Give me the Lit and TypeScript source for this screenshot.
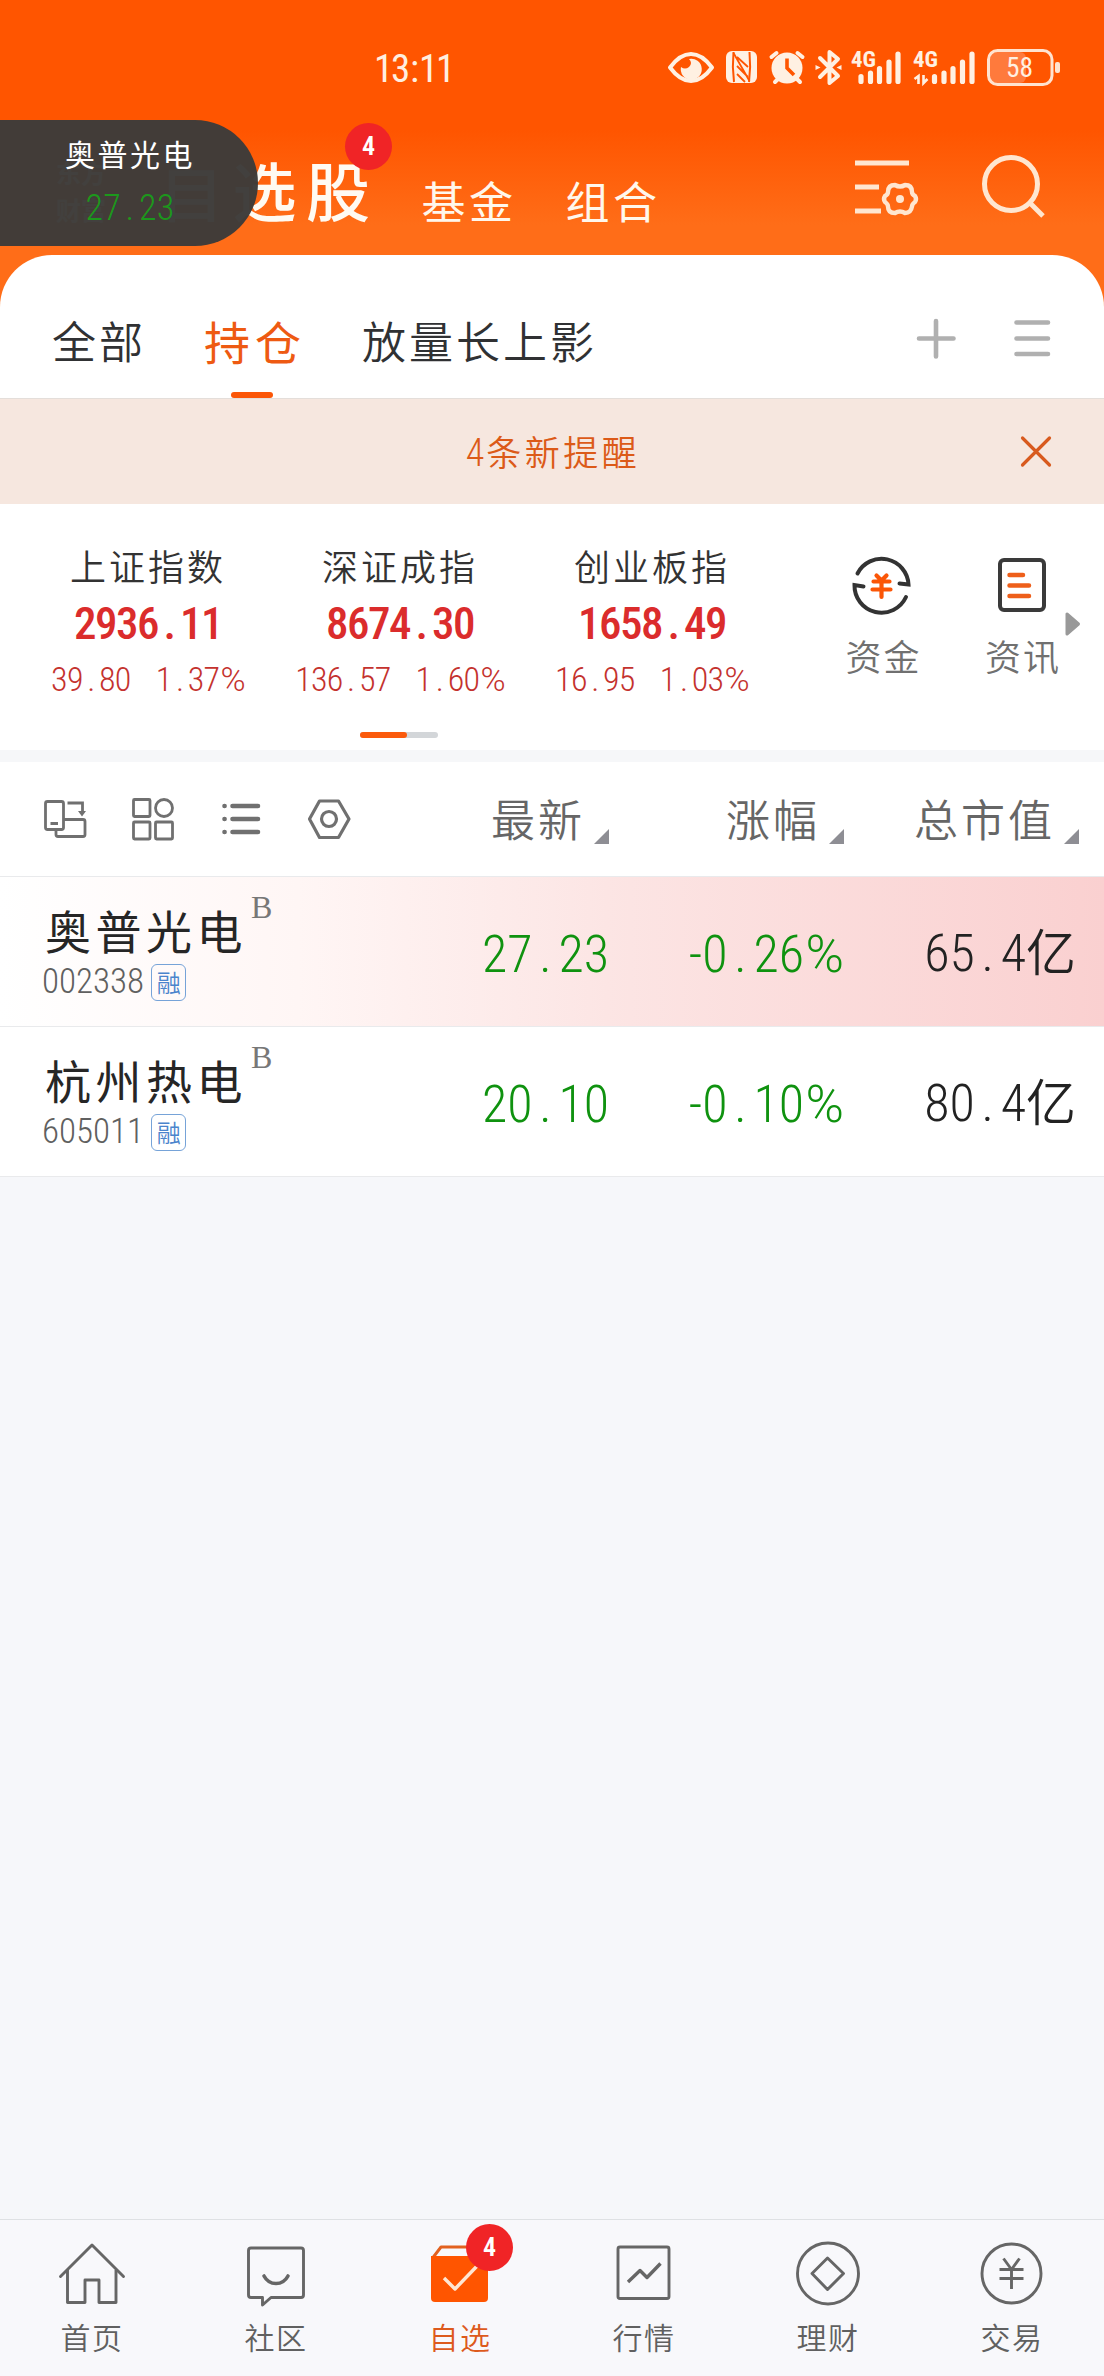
import { LitElement, html, svg, css, nothing } from "lit";
import { customElement, property } from "lit/decorators.js";
import { classMap } from "lit/directives/class-map.js";

/** Figure whose decimal point takes a full digit cell and whose percent sign is wide. */
const figure = (value: string) => {
  const percent = value.endsWith("%");
  const [whole, rest] = value.replace("%", "").split(".");
  return html`${whole}<span class="dot">.</span>${rest}${percent ? html`<span class="percent">%</span>` : nothing}`;
};

const figureStyles = css`
  .num {
    font-family: "Roboto Condensed", Roboto, "Noto Sans CJK SC", sans-serif;
    font-weight: 300;
    white-space: nowrap;
  }
  .dot {
    padding: 0 0.13em;
  }
  .percent {
    font-family: Roboto, sans-serif;
    font-weight: 300;
    margin-left: 0.03em;
  }
  svg {
    display: block;
    flex: none;
    fill: none;
    overflow: visible;
  }
`;

@customElement("status-bar")
class StatusBar extends LitElement {
  static styles = [
    figureStyles,
    css`
      :host {
        display: flex;
        height: 120px;
        box-sizing: border-box;
        padding: 41px 44px 0 374px;
        justify-content: space-between;
        color: #ffeedf;
      }
      .time {
        font-size: 39px;
        line-height: 40px;
        letter-spacing: -2.200px;
        margin-top: 8px;
        font-weight: 400;
      }
      .colon {
        padding: 0 2px;
      }
      .sig {
        font: bold 22px/22px "Roboto Condensed", Roboto, sans-serif;
      }
      .bat {
        font: 28px/28px "Roboto Condensed", Roboto, sans-serif;
      }
    `,
  ];
  render() {
    return html`
      <div class="num time">13<span class="colon">:</span>11</div>
      <svg width="394" height="50" viewBox="666 41 394 50">
        <g stroke="#fff0e2" stroke-width="4" stroke-linecap="round" stroke-linejoin="round">
          <path d="M670 67.500Q680 54 691 54T712 67.500Q702 81 691 81T670 67.500Z" />
          <path d="M771.500 57l5-4M802.500 57l-5-4M775 82l4-4M800 82l-4-4" />
          <path d="M820 58L838 76L829.500 83V52L838 59L820 77" />
        </g>
        <g fill="#fff0e2">
          <path d="M689 59a10.500 10.500 0 1 1-8 8q4 3 8 0q4-4 0-8Z" />
          <rect x="726" y="51" width="31" height="32" rx="6" />
          <circle cx="787" cy="68" r="15.500" />
          <path d="M815.500 65l5 2.500l-5 2.500zM841.500 65l-5 2.500l5 2.500z" />
        </g>
        <path d="M733.500 52Q732 67 734 82M749.500 52Q751 67 749 82" stroke="#ff5500" stroke-width="2" />
        <path d="M733.500 53L749.500 81M737 57L748 67M737 66L748 77M737 74l8 8" stroke="#ff5500" stroke-width="1.800" />
        <path d="M787 58.500V68l7 7" stroke="#ff5500" stroke-width="3.600" />
        <text class="sig" x="851" y="67" fill="#fff0e2" textLength="25" lengthAdjust="spacingAndGlyphs">4G</text>
        <text class="sig" x="913" y="67" fill="#fff0e2" textLength="25" lengthAdjust="spacingAndGlyphs">4G</text>
        <path
          d="M861 76.500V81.500M870.500 73V81.500M879.500 68.500V81.500M889 62V81.500M898 54V81.500M934.500 76.500V81.500M944 73V81.500M953 68.500V81.500M962.500 62V81.500M972 54V81.500"
          stroke="#fff0e2" stroke-width="5.200" stroke-linecap="round"
        />
        <path d="M918.500 84V76l-4 3M923.500 75V83l4-4" stroke="#fff0e2" stroke-width="2.600" />
        <rect x="990" y="52" width="36" height="31" rx="6" fill="#ff7a3c" />
        <rect x="988.500" y="50.500" width="63.500" height="34" rx="9" stroke="#ffe3d0" stroke-width="3" />
        <rect x="1055" y="62" width="5" height="11" rx="2" fill="#ffe3d0" />
        <text class="bat" x="1006" y="77" fill="#fff0e2" textLength="27" lengthAdjust="spacingAndGlyphs">58</text>
      </svg>
    `;
  }
}

@customElement("title-bar")
class TitleBar extends LitElement {
  static styles = [
    figureStyles,
    css`
      :host {
        display: flex;
        height: 135px;
        position: relative;
        color: #fff7ec;
      }
      .logo {
        width: 54px;
        margin: 34px 0 0 56px;
        font-size: 25px;
        line-height: 37px;
        font-weight: 700;
        height: 76px;
      }
      .title {
        margin: 26px 0 0 49px;
        font-size: 64px;
        line-height: 84px;
        letter-spacing: 9.500px;
        font-weight: 500;
        color: #fffaf2;
        height: 84px;
      }
      .link {
        margin-top: 50px;
        font-size: 44px;
        line-height: 60px;
        letter-spacing: 3.500px;
        font-weight: 400;
      }
      .fund {
        margin-left: 42px;
      }
      .combo {
        margin-left: 49px;
      }
      .tools {
        margin: 35px 57px 0 auto;
      }
      .badge {
        position: absolute;
        left: 345px;
        top: 3px;
        width: 47px;
        height: 47px;
        border-radius: 50%;
        background: #f02426;
        font-size: 26px;
        font-weight: 600;
        line-height: 47px;
        text-align: center;
        color: #fff;
      }
      .pill {
        position: absolute;
        left: 0;
        top: 0;
        width: 258px;
        height: 126px;
        border-radius: 0 63px 63px 0;
        background: rgba(61, 59, 57, 0.975);
        color: #fff;
        text-align: center;
        box-sizing: border-box;
        padding: 11px 0 0 2px;
      }
      .name {
        font-size: 30px;
        line-height: 44px;
        letter-spacing: 2.500px;
        font-weight: 400;
      }
      .price {
        color: #1c981c;
        font-size: 36px;
        line-height: 50px;
        letter-spacing: 0.200px;
        margin-top: 8px;
      }
    `,
  ];
  render() {
    return html`
      <div class="logo">东方财富</div>
      <div class="title">自选股</div>
      <div class="link fund">基金</div>
      <div class="link combo">组合</div>
      <svg class="tools" width="194" height="64" viewBox="853 155 194 64" stroke="#ffe6d0" stroke-width="5">
        <path d="M855 163H909M855 187H879M855 211H881" />
        <path
          d="M895 185Q900 188 905 185Q912 185 912 192Q912 194.500 915 196Q917 199 915 202Q912 204 912 206.500Q911 213 905 213Q900 210 895 213Q888 213 888 206.500Q888 204 885 202Q883 199 885 196Q888 194.500 888 192Q888 185 895 185Z"
          stroke-width="4.400" stroke-linejoin="round"
        />
        <circle cx="900" cy="199" r="4" fill="#ffe6d0" stroke="none" />
        <circle cx="1011" cy="184" r="26.500" />
        <path d="M1029 202L1043 216" />
      </svg>
      <div class="badge num">4</div>
      <div class="pill">
        <div class="name">奥普光电</div>
        <div class="num price">${figure("27.23")}</div>
      </div>
    `;
  }
}

@customElement("group-tabs")
class GroupTabs extends LitElement {
  static styles = [
    figureStyles,
    css`
      :host {
        display: flex;
        height: 143px;
        background: #fff;
        border-radius: 52px 52px 0 0;
        padding: 0 51px 0 52px;
        color: #303133;
      }
      .tab {
        font-size: 44px;
        line-height: 60px;
        padding-top: 55px;
        letter-spacing: 3px;
        margin-right: 58px;
      }
      .on {
        position: relative;
        color: #ee5a12;
        font-size: 46px;
        letter-spacing: 5px;
        font-weight: 400;
        margin-right: 56px;
      }
      .on::after {
        content: "";
        position: absolute;
        left: 27px;
        bottom: 0;
        width: 42px;
        height: 6px;
        border-radius: 3px;
        background: #fb5607;
      }
      .tools {
        margin: 61px 0 0 auto;
      }
    `,
  ];
  @property({ attribute: false }) tabs: string[] = ["全部", "持仓", "放量长上影"];
  render() {
    return html`
      ${this.tabs.map((t, i) => html`<div class=${classMap({ tab: true, on: i === 1 })}>${t}</div>`)}
      <svg class="tools" width="140" height="46" viewBox="913 316 140 46" stroke="#b0b0b0" stroke-width="4.600" stroke-linecap="round">
        <path d="M919 338.500H953.500M936 321V356.500M1016.500 322.500H1048M1016.500 338.500H1048M1016.500 354H1048" />
      </svg>
    `;
  }
}

@customElement("alert-banner")
class AlertBanner extends LitElement {
  static styles = [
    figureStyles,
    css`
      :host {
        display: grid;
        grid-template-columns: 104px 1fr 104px;
        align-items: center;
        justify-items: center;
        height: 106px;
        box-sizing: border-box;
        border-top: 1px solid #e4deda;
        background: #f6e7df;
        color: #dc5a18;
      }
      .msg {
        grid-column: 2;
        font-size: 35px;
        line-height: 50px;
        letter-spacing: 3.500px;
        padding-left: 2px;
      }
      .num {
        font-size: 38px;
        letter-spacing: 2px;
      }
      svg {
        margin: 0 32px 0 0;
      }
    `,
  ];
  render() {
    return html`
      <div class="msg"><span class="num">4</span>条新提醒</div>
      <svg width="34" height="34" viewBox="0 0 34 34" stroke="#d85a1e" stroke-width="3.200" stroke-linecap="round">
        <path d="M3.500 3L30.500 30M30.500 3L3.500 30" />
      </svg>
    `;
  }
}

interface IndexQuote {
  name: string;
  value: string;
  diff: string;
  pct: string;
}

@customElement("index-strip")
class IndexStrip extends LitElement {
  static styles = [
    figureStyles,
    css`
      :host {
        display: grid;
        grid-template-columns: 252px 252px 252px 34px 140px 139px;
        padding: 35px 0 0 22px;
        height: 246px;
        box-sizing: border-box;
        background: #fff;
        position: relative;
      }
      .quote,
      .tool {
        display: flex;
        flex-direction: column;
        align-items: center;
      }
      .name {
        font-size: 36px;
        line-height: 54px;
        letter-spacing: 3px;
        color: #333;
        margin-top: -1px;
      }
      .value {
        font-size: 45px;
        line-height: 56px;
        font-weight: 500;
        letter-spacing: -1.500px;
        color: #db2c2c;
        margin-top: 4px;
      }
      .value .dot {
        padding: 0 0.12em;
      }
      .move {
        display: flex;
        gap: 25px;
        font-size: 34px;
        line-height: 54px;
        letter-spacing: -0.700px;
        color: #c4322e;
      }
      .money {
        grid-column: 5;
      }
      .tool svg {
        margin-top: 14px;
      }
      .label {
        margin-top: 11px;
        font-size: 36px;
        line-height: 54px;
        letter-spacing: 2px;
        padding-left: 3px;
        color: #707070;
      }
      .pager {
        position: absolute;
        left: 360px;
        top: 228px;
        width: 78px;
        height: 6px;
        border-radius: 3px;
        background: #d3d6d9;
      }
      .page {
        width: 47px;
        height: 6px;
        border-radius: 3px;
        background: #fb5a0c;
      }
      .more {
        position: absolute;
        left: 1065px;
        top: 107px;
      }
    `,
  ];
  @property({ attribute: false }) quotes: IndexQuote[] = [
    { name: "上证指数", value: "2936.11", diff: "39.80", pct: "1.37%" },
    { name: "深证成指", value: "8674.30", diff: "136.57", pct: "1.60%" },
    { name: "创业板指", value: "1658.49", diff: "16.95", pct: "1.03%" },
  ];
  render() {
    return html`
      ${this.quotes.map(
        (q) => html`
          <div class="quote">
            <div class="name">${q.name}</div>
            <div class="num value">${figure(q.value)}</div>
            <div class="num move"><span>${figure(q.diff)}</span><span>${figure(q.pct)}</span></div>
          </div>
        `
      )}
      <div class="tool money">
        <svg width="64" height="64" viewBox="848.500 553 64 64" stroke="#333" stroke-width="4" stroke-linecap="round">
          <path d="M856 573.500A27 27 0 0 1 907 584.500L898 583.500" />
          <path d="M904.500 597A27 27 0 0 1 853 585L862 586.500" />
          <path d="M875 575.500l5 5l5-5M872 581.500H888M871 589.500H889M880 580V597" stroke="#fb5607" stroke-width="4.200" />
        </svg>
        <div class="label">资金</div>
      </div>
      <div class="tool">
        <svg width="64" height="64" viewBox="989 553 64 64" stroke-linecap="round">
          <rect x="999" y="560" width="44" height="50" rx="4" stroke="#3a3a3a" stroke-width="4" />
          <path d="M1008.500 575H1022M1008.500 585.500H1028M1008.500 596H1028" stroke="#ee5f1a" stroke-width="4.500" />
        </svg>
        <div class="label">资讯</div>
      </div>
      <div class="pager"><div class="page"></div></div>
      <svg class="more" width="16" height="26" viewBox="0 0 16 26">
        <path d="M2 3V23L13.500 13Z" fill="#999" stroke="#999" stroke-width="3" stroke-linejoin="round" />
      </svg>
    `;
  }
}

interface Stock {
  name: string;
  code: string;
  latest: string;
  change: string;
  cap: string;
}

@customElement("stock-table")
class StockTable extends LitElement {
  static styles = [
    figureStyles,
    css`
      :host {
        display: block;
        background: #fff;
        border-top: 12px solid #f6f7f9;
      }
      .head,
      .row {
        display: grid;
        grid-template-columns: 374px 235px 235px 235px;
        border-bottom: 1px solid #e9eaec;
        box-sizing: border-box;
      }
      .head {
        height: 115px;
      }
      .tools {
        margin: 32px 0 0 40px;
      }
      .col {
        display: flex;
        justify-content: flex-end;
        font-size: 44px;
        line-height: 60px;
        padding-top: 26px;
        letter-spacing: 3px;
        color: #666;
      }
      .sort {
        margin: 41px 0 0 9px;
      }
      .row {
        height: 150px;
      }
      .hot {
        background: linear-gradient(90deg, #fff 0%, #fff6f5 27%, #fce5e4 55%, #fad0d0 100%);
      }
      .line {
        display: flex;
        padding: 18px 0 0 45px;
      }
      .name {
        font-size: 46px;
        line-height: 68px;
        letter-spacing: 4.500px;
        color: #262626;
        font-weight: 400;
      }
      .flag {
        font: 32px/34px "Liberation Serif", serif;
        color: #777;
        margin: -5px 0 0 4px;
        height: 34px;
      }
      .sub {
        display: flex;
        align-items: center;
        padding-left: 42px;
        height: 38px;
      }
      .code {
        font-size: 35px;
        line-height: 36px;
        color: #606060;
        margin: 0 7px 0 0;
      }
      .tag {
        width: 35px;
        height: 37px;
        box-sizing: border-box;
        border: 1.500px solid #76a3d8;
        border-radius: 6px;
        font-size: 24px;
        line-height: 33px;
        text-align: center;
        color: #4a84cc;
      }
      .val {
        text-align: right;
        font-size: 52px;
        line-height: 60px;
        padding-top: 48px;
        color: #0f920f;
        font-weight: 350;
      }
      .cap {
        color: #222;
        padding: 42px 3px 0 0;
      }
      .unit {
        font-family: "Noto Sans CJK SC", sans-serif;
        font-size: 50px;
      }
    `,
  ];
  @property({ attribute: false }) stocks: Stock[] = [
    { name: "奥普光电", code: "002338", latest: "27.23", change: "-0.26%", cap: "65.4" },
    { name: "杭州热电", code: "605011", latest: "20.10", change: "-0.10%", cap: "80.4" },
  ];
  render() {
    return html`
      <div class="head">
        <svg class="tools" width="314" height="48" viewBox="40 794 314 48" stroke="#707070" stroke-width="2.800">
          <rect x="45.500" y="801.500" width="18" height="28" rx="2" />
          <path d="M50.500 823.500H58M64 819.500H83q2 0 2 2V834.500q0 2-2 2H58q-2 0-2-2V830M67.500 803H82.500V812" />
          <path d="M78 811H86L82 816.500Z" fill="#707070" stroke="none" />
          <rect x="133.500" y="799.500" width="16.500" height="17" rx="1" />
          <rect x="133.500" y="822" width="16.500" height="17" rx="1" />
          <rect x="155.500" y="822" width="17" height="17" rx="1" />
          <circle cx="164" cy="808" r="8.500" />
          <path d="M232.500 806H258M232.500 819H258M232.500 832H258M224.500 806h.1M224.500 819h.1M224.500 832h.1" stroke-width="4.600" stroke-linecap="round" />
          <path d="M319.500 801H338.500L349 819L338.500 837.500H319.500L309.500 819Z" stroke-linejoin="round" stroke-width="3.200" />
          <circle cx="329" cy="819" r="7.500" stroke-width="3.200" />
        </svg>
        ${["最新", "涨幅", "总市值"].map(
          (c) => html`<div class="col">
            ${c}<svg class="sort" width="15" height="15"><path d="M15 0V15H0Z" fill="#8e8e94" /></svg>
          </div>`
        )}
      </div>
      ${this.stocks.map(
        (s, i) => html`
          <div class=${classMap({ row: true, hot: i === 0 })}>
            <div>
              <div class="line">
                <div class="name">${s.name}</div>
                <div class="flag">B</div>
              </div>
              <div class="sub">
                <div class="num code">${s.code}</div>
                <div class="tag">融</div>
              </div>
            </div>
            <div class="num val">${figure(s.latest)}</div>
            <div class="num val">${figure(s.change)}</div>
            <div class="num val cap">${figure(s.cap)}<span class="unit">亿</span></div>
          </div>
        `
      )}
    `;
  }
}

@customElement("bottom-nav")
class BottomNav extends LitElement {
  static styles = [
    figureStyles,
    css`
      :host {
        display: grid;
        grid-template-columns: repeat(6, 1fr);
        height: 157px;
        box-sizing: border-box;
        border-top: 1px solid #dfe1e4;
        background: #f8f8fb;
        color: #606060;
      }
      .item {
        position: relative;
        display: flex;
        flex-direction: column;
        align-items: center;
        padding-top: 18px;
        font-size: 30px;
        line-height: 44px;
      }
      .label {
        margin-top: 4px;
        letter-spacing: 1.500px;
      }
      .on {
        color: #dd5a1c;
      }
      .badge {
        position: absolute;
        left: 98px;
        top: 4px;
        width: 47px;
        height: 47px;
        border-radius: 50%;
        background: #f02426;
        color: #fff;
        font-size: 26px;
        font-weight: 600;
        line-height: 47px;
        text-align: center;
      }
    `,
  ];
  private items = [
    {
      label: "首页",
      icon: svg`<path d="M4.500 38.500L36 7L67.500 38.500" stroke-linecap="round"/><path d="M11.500 32V64.500H29V42H43V64.500H60V32"/>`,
    },
    {
      label: "社区",
      icon: svg`<path d="M11 10H61q2.500 0 2.500 2.500V57q0 2.500-2.500 2.500H31L22.500 67V59.500H11q-2.500 0-2.500-2.500V12.500Q8.500 10 11 10Z"/><path d="M24 38q4 7.500 12 7.500T48 38" stroke-width="3.600" stroke-linecap="round"/>`,
    },
    {
      label: "自选",
      icon: svg`<path d="M9 19.500L17 9H60V20Z" stroke="#e2611f"/><path d="M7 18H64V60q0 4-4 4H11q-4 0-4-4Z" fill="#ff5500" stroke="none"/><path d="M20 40L31 51L55 26" stroke="#ffe6d2" stroke-width="3.400"/>`,
    },
    {
      label: "行情",
      icon: svg`<rect x="10" y="9" width="51" height="51.500" rx="2"/><path d="M20 44L32 32.500L39 39.500L52.500 25.500" stroke-width="3.400"/>`,
    },
    {
      label: "理财",
      icon: svg`<circle cx="36" cy="35.500" r="30.500"/><path d="M35.500 20L51.500 35.500L35.500 51.500L20 35.500Z"/>`,
    },
    {
      label: "交易",
      icon: svg`<circle cx="35.500" cy="35.500" r="29.500"/><path d="M27.500 20.500L35.500 31.500L43.500 20.500M23.500 31.500H47.500M23.500 40.500H47.500M35.500 31V51"/>`,
    },
  ];
  render() {
    return this.items.map(
      (it, i) => html`
        <div class=${classMap({ item: true, on: i === 2 })}>
          <svg width="72" height="72" viewBox="0 0 72 72" stroke="#666" stroke-width="2.900" stroke-linejoin="round">${it.icon}</svg>
          <div class="label">${it.label}</div>
          ${i === 2 ? html`<div class="badge num">4</div>` : nothing}
        </div>
      `
    );
  }
}

@customElement("app-root")
class AppRoot extends LitElement {
  static styles = css`
    :host {
      display: flex;
      flex-direction: column;
      width: 1104px;
      height: 2376px;
      overflow: hidden;
      background: #f6f7fa;
      font-family: "Noto Sans CJK SC", sans-serif;
      font-weight: 350;
    }
    .top {
      background: linear-gradient(180deg, #ff5500 0px, #ff5500 130px, #ff6d18 225px, #ff6d18 100%);
    }
    .rest {
      flex: 1;
    }
  `;
  render() {
    return html`
      <div class="top">
        <status-bar></status-bar>
        <title-bar></title-bar>
        <group-tabs></group-tabs>
      </div>
      <alert-banner></alert-banner>
      <index-strip></index-strip>
      <stock-table></stock-table>
      <div class="rest"></div>
      <bottom-nav></bottom-nav>
    `;
  }
}
